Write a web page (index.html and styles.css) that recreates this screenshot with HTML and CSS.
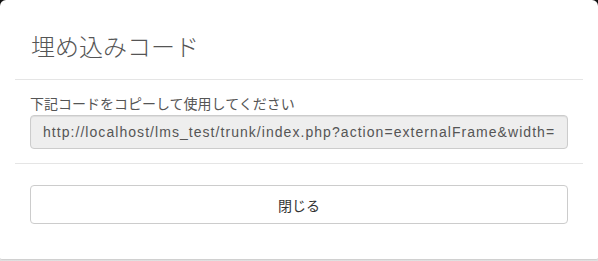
FILE: index.html
```html
<!DOCTYPE html>
<html lang="ja">
<head>
<meta charset="UTF-8" />
<meta name="viewport" content="width=device-width, initial-scale=1" />
<title>埋め込みコード</title>
<link rel="stylesheet" href="styles.css">
</head>
<body>
  <div class="modal" role="dialog" aria-labelledby="embed-title">
    <div class="modal-header">
      <h4 id="embed-title" class="modal-title">埋め込みコード</h4>
    </div>
    <div class="modal-body">
      <label for="embed-code">下記コードをコピーして使用してください</label>
      <input id="embed-code" class="form-control" type="text" readonly
        value="http://localhost/lms_test/trunk/index.php?action=externalFrame&amp;width=320&amp;height=240">
    </div>
    <div class="modal-footer">
      <button type="button" class="btn">閉じる</button>
    </div>
  </div>
</body>
</html>
```

FILE: styles.css
```css
:root {
  --card-bg: #ffffff;
  --divider: #e5e5e5;
  --input-bg: #eeeeee;
  --input-border: #cccccc;
  --title-color: #555555;
  --text-color: #333333;
}
html, body {
  margin: 0;
  height: 100%;
}
body {
  background: linear-gradient(#111111, #111111 40%, #e0e0e0);
  font-family: "Liberation Sans", "Noto Sans CJK JP", sans-serif;
  color: var(--text-color);
}
.modal {
  background: var(--card-bg);
  border-radius: 6px 6px 2px 2px;
  border-bottom: 1px solid #d0d0d0;
  height: 259px;
  padding: 0 15px;
}
.modal-header {
  padding: 33px 16px 20px;
  border-bottom: 1px solid var(--divider);
}
.modal-title {
  margin: 0;
  font-family: "Noto Sans CJK JP", sans-serif;
  font-size: 24px;
  font-weight: 300;
  line-height: 26px;
  color: var(--title-color);
}
.modal-body {
  padding: 14px 15px 14px;
  border-bottom: 1px solid var(--divider);
}
label {
  display: block;
  font-family: "Noto Sans CJK JP", sans-serif;
  font-size: 14px;
  line-height: 19px;
  color: #555555;
  margin-bottom: 2px;
}
.form-control {
  display: block;
  box-sizing: border-box;
  width: 100%;
  height: 34px;
  padding: 6px 12px;
  font-family: "Liberation Sans", sans-serif;
  font-size: 14px;
  letter-spacing: 1.05px;
  color: #555555;
  background: var(--input-bg);
  border: 1px solid var(--input-border);
  border-radius: 4px;
  box-shadow: inset 0 1px 1px rgb(0 0 0 / 0.075);
  outline: none;
}
.modal-footer {
  padding: 21px 15px 0;
}
.btn {
  display: block;
  width: 100%;
  height: 39px;
  background: var(--card-bg);
  border: 1px solid var(--input-border);
  border-radius: 4px;
  font-family: "Noto Sans CJK JP", sans-serif;
  font-size: 14px;
  color: var(--text-color);
  cursor: pointer;
}
```
